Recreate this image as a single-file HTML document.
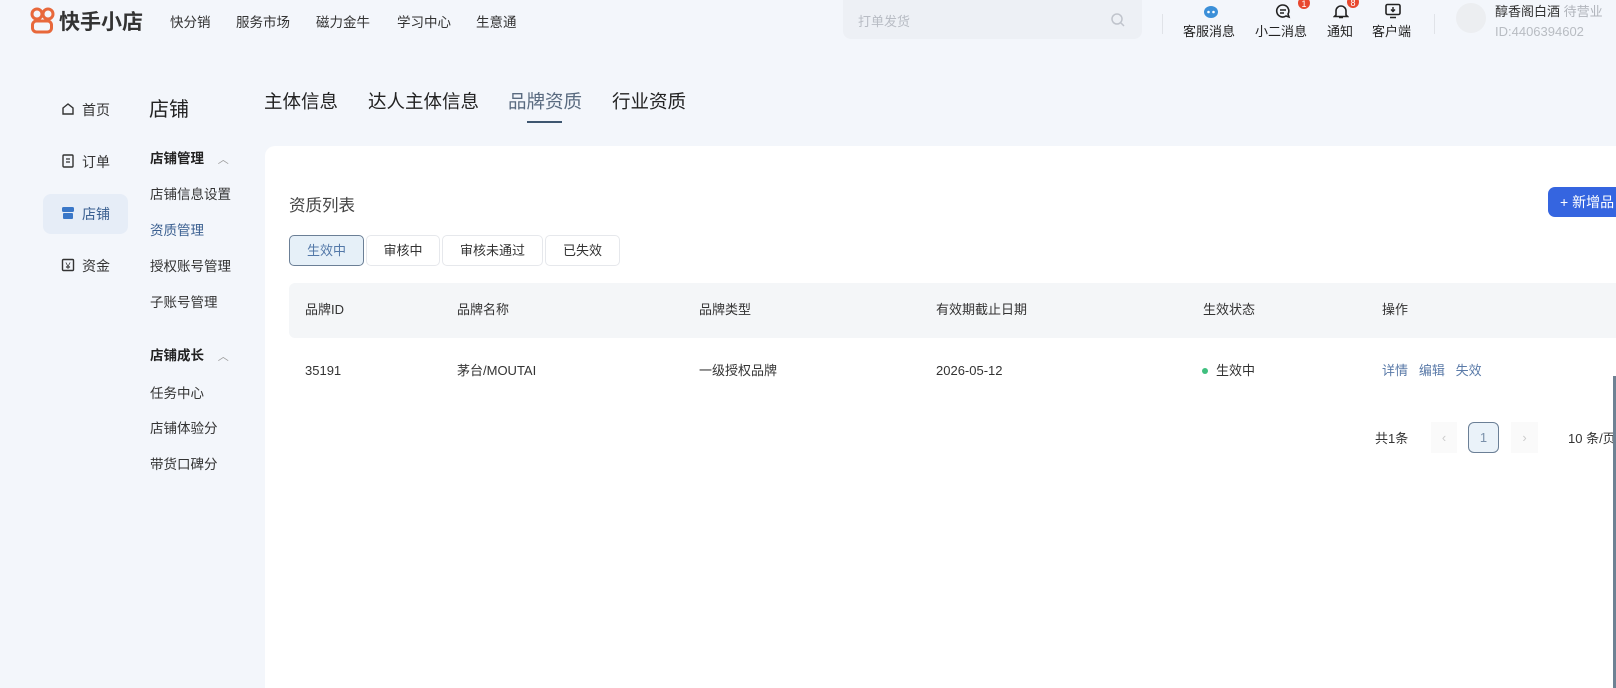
<!DOCTYPE html>
<html><head><meta charset="utf-8"><style>
*{margin:0;padding:0;box-sizing:border-box}
body{width:1616px;height:688px;overflow:hidden;background:#f3f6fb;font-family:"Liberation Sans","Noto Sans CJK SC",sans-serif;color:#333;position:relative}
.a{position:absolute;white-space:nowrap}
.nav{font-size:13.5px;color:#333;top:11px}
.ri{font-size:13px;top:21px;color:#222}
.lm{font-size:14px;color:#333}
.sm{font-size:13.5px;color:#333}
.tab{font-size:18.5px;top:88px;color:#222}
.fb{top:235px;height:31px;border:1px solid #e6e8ec;border-radius:5px;background:#fff;font-size:13px;text-align:center;line-height:29px;color:#333}
.th{font-size:13px;top:300px;line-height:20px;color:#333}
.td{font-size:13px;top:361px;line-height:20px;color:#333}
</style></head><body>
<svg class="a" style="left:30px;top:7px" width="26" height="28" viewBox="0 0 26 28"><circle cx="7" cy="7" r="5" fill="none" stroke="#e8683b" stroke-width="3"/><circle cx="18" cy="7" r="5" fill="none" stroke="#e8683b" stroke-width="3"/><rect x="2.5" y="14" width="19" height="11" rx="4" fill="none" stroke="#e8683b" stroke-width="3"/></svg>
<div class="a" style="left:59px;top:6px;font-size:21px;font-weight:bold;color:#333">快手小店</div>
<div class="a nav" style="left:170px">快分销</div>
<div class="a nav" style="left:236px">服务市场</div>
<div class="a nav" style="left:316px">磁力金牛</div>
<div class="a nav" style="left:397px">学习中心</div>
<div class="a nav" style="left:476px">生意通</div>
<div class="a" style="left:843px;top:0;width:299px;height:39px;background:#edf0f5;border-radius:0 0 8px 8px"></div>
<div class="a" style="left:858px;top:11px;font-size:13px;color:#b8bcc4">打单发货</div>
<svg class="a" style="left:1110px;top:12px" width="16" height="16"><circle cx="7" cy="7" r="5" fill="none" stroke="#c0c4cc" stroke-width="1.5"/><path d="M11 11l3 3" stroke="#c0c4cc" stroke-width="1.5"/></svg>
<div class="a" style="left:1162px;top:14px;width:1px;height:20px;background:#e0e3e8"></div>
<svg class="a" style="left:1203px;top:4px" width="16" height="14"><ellipse cx="8" cy="8" rx="7" ry="6" fill="#3b8fd8"/><circle cx="5.5" cy="8" r="1.3" fill="#fff"/><circle cx="10.5" cy="8" r="1.3" fill="#fff"/></svg>
<div class="a ri" style="left:1183px">客服消息</div>
<svg class="a" style="left:1275px;top:3px" width="16" height="16"><path d="M8 2a6 6 0 1 0 3 11l3 1-1-3A6 6 0 0 0 8 2z" fill="none" stroke="#222" stroke-width="1.6"/><path d="M5 7h6M5 10h4" stroke="#222" stroke-width="1.4"/></svg>
<div class="a" style="left:1298px;top:-3px;width:12px;height:12px;border-radius:6px;background:#e8482f;color:#fff;font-size:9px;text-align:center;line-height:14px">1</div>
<div class="a ri" style="left:1255px">小二消息</div>
<svg class="a" style="left:1333px;top:3px" width="16" height="16"><path d="M3 12V8a5 5 0 0 1 10 0v4l1.5 1.5h-13z M6 14.5h4" fill="none" stroke="#222" stroke-width="1.6"/></svg>
<div class="a" style="left:1347px;top:-4px;width:12px;height:12px;border-radius:6px;background:#e8482f;color:#fff;font-size:9px;text-align:center;line-height:14px">8</div>
<div class="a ri" style="left:1327px">通知</div>
<svg class="a" style="left:1384px;top:3px" width="18" height="16"><rect x="2" y="1.5" width="14" height="10" rx="1.5" fill="none" stroke="#222" stroke-width="1.6"/><path d="M6 14.5h6M9 4v4M7 6.5l2 2 2-2" stroke="#222" stroke-width="1.4" fill="none"/></svg>
<div class="a ri" style="left:1372px">客户端</div>
<div class="a" style="left:1434px;top:14px;width:1px;height:20px;background:#e0e3e8"></div>
<div class="a" style="left:1456px;top:3px;width:30px;height:30px;border-radius:15px;background:#eceef1"></div>
<div class="a" style="left:1495px;top:1px;font-size:13px;color:#333">醇香阁白酒 <span style="color:#b0b4bb">待营业</span></div>
<div class="a" style="left:1495px;top:24px;font-size:13px;color:#b8bcc2">ID:4406394602</div>
<svg class="a" style="left:61px;top:102px" width="14" height="14"><path d="M2 6l5-4 5 4v6H2z" fill="none" stroke="#333" stroke-width="1.4"/></svg>
<div class="a lm" style="left:82px;top:100px">首页</div>
<svg class="a" style="left:61px;top:154px" width="14" height="14"><rect x="2" y="1" width="10" height="12" rx="1" fill="none" stroke="#333" stroke-width="1.4"/><path d="M5 5h4M5 8h4" stroke="#333" stroke-width="1.3"/></svg>
<div class="a lm" style="left:82px;top:152px">订单</div>
<div class="a" style="left:43px;top:194px;width:85px;height:40px;border-radius:8px;background:#e6edf7"></div>
<svg class="a" style="left:61px;top:206px" width="14" height="14"><rect x="1" y="1" width="12" height="5" rx="1.5" fill="#3a77c8"/><rect x="2" y="7" width="10" height="6" rx="1" fill="#3a77c8"/></svg>
<div class="a lm" style="left:82px;top:204px;color:#3a5f90">店铺</div>
<svg class="a" style="left:61px;top:258px" width="14" height="14"><rect x="1.5" y="1.5" width="11" height="11" rx="1" fill="none" stroke="#333" stroke-width="1.4"/><text x="7" y="11" font-size="9" text-anchor="middle" fill="#333" font-family="Liberation Sans">¥</text></svg>
<div class="a lm" style="left:82px;top:256px">资金</div>
<div class="a" style="left:149px;top:93px;font-size:20px;color:#222">店铺</div>
<div class="a sm" style="left:150px;top:147px;font-weight:bold;color:#222">店铺管理 <span style="font-weight:normal;color:#999;margin-left:10px;font-size:11px">︿</span></div>
<div class="a sm" style="left:150px;top:183px">店铺信息设置</div>
<div class="a sm" style="left:150px;top:219px;color:#3a5f90">资质管理</div>
<div class="a sm" style="left:150px;top:255px">授权账号管理</div>
<div class="a sm" style="left:150px;top:291px">子账号管理</div>
<div class="a sm" style="left:150px;top:344px;font-weight:bold;color:#222">店铺成长 <span style="font-weight:normal;color:#999;margin-left:10px;font-size:11px">︿</span></div>
<div class="a sm" style="left:150px;top:382px">任务中心</div>
<div class="a sm" style="left:150px;top:417px">店铺体验分</div>
<div class="a sm" style="left:150px;top:453px">带货口碑分</div>
<div class="a tab" style="left:264px">主体信息</div>
<div class="a tab" style="left:368px">达人主体信息</div>
<div class="a tab" style="left:508px;color:#5a6b80">品牌资质</div>
<div class="a tab" style="left:612px">行业资质</div>
<div class="a" style="left:527px;top:121px;width:35px;height:2px;background:#3e5670"></div>
<div class="a" style="left:265px;top:146px;width:1351px;height:542px;background:#fff;border-radius:10px 0 0 0"></div>
<div class="a" style="left:289px;top:192px;font-size:16.5px;color:#444">资质列表</div>
<div class="a" style="left:1548px;top:187px;width:80px;height:30px;border-radius:7px;background:#3565e0;color:#fff;font-size:14px;line-height:30px;padding-left:12px">+ 新增品</div>
<div class="a fb" style="left:289px;width:75px;background:#e6f0f8;border-color:#6b7f96;color:#5378a8">生效中</div>
<div class="a fb" style="left:366px;width:74px">审核中</div>
<div class="a fb" style="left:442px;width:101px">审核未通过</div>
<div class="a fb" style="left:545px;width:75px">已失效</div>
<div class="a" style="left:289px;top:283px;width:1327px;height:55px;background:#f4f6f8;border-radius:6px 0 0 6px"></div>
<div class="a th" style="left:305px">品牌ID</div>
<div class="a th" style="left:457px">品牌名称</div>
<div class="a th" style="left:699px">品牌类型</div>
<div class="a th" style="left:936px">有效期截止日期</div>
<div class="a th" style="left:1203px">生效状态</div>
<div class="a th" style="left:1382px">操作</div>
<div class="a td" style="left:305px">35191</div>
<div class="a td" style="left:457px">茅台/MOUTAI</div>
<div class="a td" style="left:699px">一级授权品牌</div>
<div class="a td" style="left:936px">2026-05-12</div>
<div class="a" style="left:1202px;top:368px;width:6px;height:6px;border-radius:3px;background:#3fbf7f"></div>
<div class="a td" style="left:1216px">生效中</div>
<div class="a td" style="left:1382px;color:#5a7aa8">详情&nbsp;&nbsp;&nbsp;编辑&nbsp;&nbsp;&nbsp;失效</div>
<div class="a" style="left:1375px;top:428px;font-size:13px">共1条</div>
<div class="a" style="left:1431px;top:422px;width:26px;height:31px;background:#fafafa;color:#ccc;font-size:13px;text-align:center;line-height:31px">‹</div>
<div class="a" style="left:1468px;top:422px;width:31px;height:31px;border:1px solid #6b7f96;border-radius:6px;background:#eaf2f9;color:#7a90aa;font-size:13px;text-align:center;line-height:29px">1</div>
<div class="a" style="left:1511px;top:422px;width:27px;height:31px;background:#fafafa;color:#ccc;font-size:13px;text-align:center;line-height:31px">›</div>
<div class="a" style="left:1568px;top:428px;font-size:13px">10 条/页</div>
<div class="a" style="left:1613px;top:376px;width:3px;height:312px;background:#6e8294"></div>
</body></html>
